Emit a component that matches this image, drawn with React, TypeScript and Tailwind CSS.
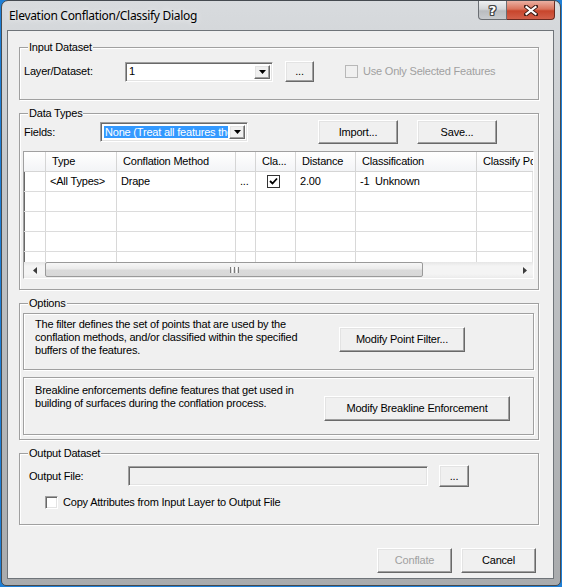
import React from "react";

const raised =
  "bg-[#f0f0f0] border border-t-white border-l-white border-r-[#696969] border-b-[#696969] shadow-[inset_-1px_-1px_0_#a0a0a0,inset_1px_1px_0_#e3e3e3]";
const sunken =
  "border border-t-[#a0a0a0] border-l-[#a0a0a0] border-r-white border-b-white shadow-[inset_1px_1px_0_#696969,inset_-1px_-1px_0_#e3e3e3]";
const etched = "border border-[#a0a0a0] shadow-[inset_1px_1px_0_#fff,1px_1px_0_#fff]";

function DropBtn() {
  return (
    <div className={`w-[16px] h-full shrink-0 flex items-center justify-center ${raised}`}>
      <svg width="7" height="4" viewBox="0 0 7 4">
        <path d="M0 0h7L3.5 4z" fill="#000" />
      </svg>
    </div>
  );
}

function Legend({ children }: { children: React.ReactNode }) {
  return <legend className="ml-[5px] px-[1px] leading-[13px] bg-[#f0f0f0]">{children}</legend>;
}

const colW = ["w-[22px]", "w-[71px]", "w-[119px]", "w-[20px]", "w-[40px]", "w-[60px]", "w-[121px]", "w-[90px]"];
const headers = ["", "Type", "Conflation Method", "", "Cla...", "Distance", "Classification", "Classify Points"];

function CheckMark() {
  return (
    <svg width="9" height="9" viewBox="0 0 9 9">
      <path d="M1 4 L3.5 6.5 L8 1.5" stroke="#000" strokeWidth="1.8" fill="none" />
    </svg>
  );
}

function Grid() {
  const row1: React.ReactNode[] = [
    "",
    "<All Types>",
    "Drape",
    "...",
    <div className="w-[13px] h-[13px] border border-[#333] bg-white flex items-center justify-center mx-auto">
      <CheckMark />
    </div>,
    "2.00",
    "-1  Unknown",
    "",
  ];
  const emptyRow = (h: string, key: number) => (
    <div key={key} className={`${h} shrink-0 flex border-b border-[#dcdcdc]`}>
      {colW.map((w, i) => (
        <div key={i} className={`${w} shrink-0 h-full border-r border-[#d8d8d8]`} />
      ))}
    </div>
  );
  return (
    <div className={`mt-[7px] w-[511px] h-[128px] flex flex-col overflow-hidden bg-white ${sunken}`}>
      <div className="h-[20px] shrink-0 flex border-b border-[#d5d5d5] bg-[linear-gradient(to_bottom,#ffffff,#f3f4f6)]">
        {colW.map((w, i) => (
          <div
            key={i}
            className={`${w} shrink-0 h-full border-r border-[#d5d5d5] pl-[6px] flex items-center whitespace-nowrap overflow-hidden`}
          >
            {headers[i]}
          </div>
        ))}
      </div>
      <div className="h-[20px] shrink-0 flex border-b border-[#dcdcdc]">
        {colW.map((w, i) => (
          <div
            key={i}
            className={`${w} shrink-0 h-full border-r border-[#d8d8d8] pl-[4px] flex items-center whitespace-pre overflow-hidden`}
          >
            {i === 4 ? <div className="-ml-[4px] w-full">{row1[i]}</div> : row1[i]}
          </div>
        ))}
      </div>
      {emptyRow("h-[20px]", 1)}
      {emptyRow("h-[20px]", 2)}
      {emptyRow("h-[20px]", 3)}
      <div className="flex-1 flex">
        {colW.map((w, i) => (
          <div key={i} className={`${w} shrink-0 h-full border-r border-[#d8d8d8]`} />
        ))}
      </div>
      <div className="h-[16px] shrink-0 flex bg-[linear-gradient(to_bottom,#e6e6e6,#f4f4f4_25%,#f4f4f4_75%,#ebebeb)]">
        <div className="w-[21px] shrink-0 flex items-center justify-center">
          <svg width="4" height="7" viewBox="0 0 4 7">
            <path d="M4 0v7L0 3.5z" fill="#3c3c3c" />
          </svg>
        </div>
        <div className="w-[378px] shrink-0 h-[15px] rounded-[2px] border border-[#9a9a9a] bg-[linear-gradient(to_bottom,#f7f7f7,#ebebeb_45%,#dadada_55%,#d8d8d8)] flex items-center justify-center gap-[1px]">
          <div className="w-px h-[6px] bg-[#7a7a7a]" />
          <div className="w-px h-[6px] bg-white" />
          <div className="w-px h-[6px] bg-[#7a7a7a]" />
          <div className="w-px h-[6px] bg-white" />
          <div className="w-px h-[6px] bg-[#7a7a7a]" />
        </div>
        <div className="flex-1" />
        <div className="w-[17px] shrink-0 flex items-center justify-center">
          <svg width="4" height="7" viewBox="0 0 4 7">
            <path d="M0 0v7L4 3.5z" fill="#3c3c3c" />
          </svg>
        </div>
      </div>
    </div>
  );
}

export default function App() {
  return (
    <div className="w-[562px] h-[587px] bg-[#1e7fd6] px-px pb-px font-['Liberation_Sans',Arial,sans-serif] text-[11px] leading-[13px] tracking-[-0.2px] text-black">
      <div className="h-full flex flex-col rounded-t-[7px] rounded-b-[5px] border border-[#454a50] bg-[linear-gradient(to_bottom,#d8dbde,#c4c7ca_30%,#a9abad)] overflow-hidden">
        {/* title bar */}
        <div className="h-[29px] shrink-0 flex items-start">
          <span className="ml-[7px] mt-[7px] font-['Noto_Sans',sans-serif] text-[12px] leading-[16px] tracking-[-0.3px] [text-shadow:0_0_6px_rgba(255,255,255,0.9)]">
            Elevation Conflation/Classify Dialog
          </span>
          <div className="ml-auto mr-[5px] flex">
            <div className="w-[29px] h-[19px] rounded-bl-[4px] border border-t-0 border-[#6a6e73] bg-[linear-gradient(to_bottom,#eef0f2,#d3d6d9_45%,#b9bcbf_55%,#c8cbce)] flex items-center justify-center">
              <span className="font-['DejaVu_Sans',sans-serif] font-bold text-[13px] leading-[13px] tracking-normal text-white [text-shadow:1px_0_0_#444,-1px_0_0_#444,0_1px_0_#444,0_-1px_0_#444,1px_1px_0_#444,-1px_-1px_0_#444,1px_-1px_0_#444,-1px_1px_0_#444]">
                ?
              </span>
            </div>
            <div className="w-[48px] h-[19px] rounded-br-[4px] border border-t-0 border-l-0 border-[#6b2a20] bg-[linear-gradient(to_bottom,#eab0a2,#d9735c_45%,#c7452c_55%,#d2604a)] flex items-center justify-center">
              <svg width="14" height="11" viewBox="0 0 14 11">
                <path d="M2 1.5 L12 9.5 M12 1.5 L2 9.5" stroke="#3a1a14" strokeWidth="4" strokeLinecap="square" />
                <path d="M2.5 2 L11.5 9 M11.5 2 L2.5 9" stroke="#fff" strokeWidth="2.2" strokeLinecap="square" />
              </svg>
            </div>
          </div>
        </div>

        {/* client area */}
        <div className="ml-[5px] mr-[6px] mb-[6px] flex-1 border border-[#6f7479] bg-[#f0f0f0] pl-[11px] pt-[10px] flex flex-col gap-[7px]">
          {/* Input Dataset */}
          <fieldset className={`w-[520px] h-[59px] shrink-0 pl-[3px] ${etched}`}>
            <Legend>Input Dataset</Legend>
            <div className="mt-[7px] h-[21px] flex items-center">
              <div className="w-[102px] shrink-0 pl-[1px]">Layer/Dataset:</div>
              <div className={`w-[148px] h-[20px] shrink-0 bg-white flex p-[2px] ${sunken}`}>
                <div className="flex-1 pl-[1px] flex items-center">1</div>
                <DropBtn />
              </div>
              <div className={`ml-[12px] w-[29px] h-[21px] shrink-0 flex items-center justify-center ${raised}`}>...</div>
              <div className="ml-[31px] w-[13px] h-[13px] shrink-0 border border-[#b8b8b8] bg-[#f0f0f0]" />
              <span className="ml-[5px] text-[#a0a0a0]">Use Only Selected Features</span>
            </div>
          </fieldset>

          {/* Data Types */}
          <fieldset className={`w-[520px] h-[183px] shrink-0 pl-[3px] ${etched}`}>
            <Legend>Data Types</Legend>
            <div className="h-[24px] flex items-center">
              <div className="w-[77px] shrink-0 pl-[1px]">Fields:</div>
              <div className={`w-[148px] h-[20px] shrink-0 bg-white flex p-[2px] ${sunken}`}>
                <div className="flex-1 m-px bg-[#3399ff] text-white whitespace-nowrap overflow-hidden flex items-center pl-px">
                  None (Treat all features the same)
                </div>
                <DropBtn />
              </div>
              <div className={`ml-[70px] w-[80px] h-[24px] shrink-0 flex items-center justify-center ${raised}`}>Import...</div>
              <div className={`ml-[19px] w-[80px] h-[24px] shrink-0 flex items-center justify-center ${raised}`}>Save...</div>
            </div>
            <Grid />
          </fieldset>

          {/* Options */}
          <fieldset className={`w-[520px] h-[143px] shrink-0 pl-[3px] ${etched}`}>
            <Legend>Options</Legend>
            <div className={`mt-[3px] w-[511px] h-[57px] flex pl-[11px] ${etched}`}>
              <div className="w-[304px] shrink-0 pt-[4px] whitespace-nowrap">
                The filter defines the set of points that are used by the
                <br />
                conflation methods, and/or classified within the specified
                <br />
                buffers of the features.
              </div>
              <div className={`mt-[13px] w-[126px] h-[25px] shrink-0 flex items-center justify-center ${raised}`}>
                Modify Point Filter...
              </div>
            </div>
            <div className={`mt-[7px] w-[511px] h-[58px] flex pl-[11px] ${etched}`}>
              <div className="w-[289px] shrink-0 pt-[6px] whitespace-nowrap">
                Breakline enforcements define features that get used in
                <br />
                building of surfaces during the conflation process.
              </div>
              <div className={`mt-[18px] w-[186px] h-[25px] shrink-0 flex items-center justify-center ${raised}`}>
                Modify Breakline Enforcement
              </div>
            </div>
          </fieldset>

          {/* Output Dataset */}
          <fieldset className={`w-[520px] h-[78px] shrink-0 pl-[3px] ${etched}`}>
            <Legend>Output Dataset</Legend>
            <div className="mt-[5px] h-[22px] flex items-center">
              <div className="w-[105px] shrink-0 pl-[6px]">Output File:</div>
              <div className={`w-[300px] h-[20px] shrink-0 bg-[#f0f0f0] ${sunken}`} />
              <div className={`ml-[11px] w-[30px] h-[22px] shrink-0 flex items-center justify-center ${raised}`}>...</div>
            </div>
            <div className="mt-[9px] h-[13px] flex items-center">
              <div className={`ml-[22px] w-[13px] h-[13px] shrink-0 bg-white ${sunken}`} />
              <span className="ml-[5px]">Copy Attributes from Input Layer to Output File</span>
            </div>
          </fieldset>

          {/* bottom buttons */}
          <div className="w-[520px] mt-[16px] pr-[3px] flex justify-end gap-[9px]">
            <div className={`w-[75px] h-[25px] flex items-center justify-center text-[#a0a0a0] ${raised}`}>Conflate</div>
            <div className={`w-[75px] h-[25px] flex items-center justify-center ${raised}`}>Cancel</div>
          </div>
        </div>
      </div>
    </div>
  );
}
